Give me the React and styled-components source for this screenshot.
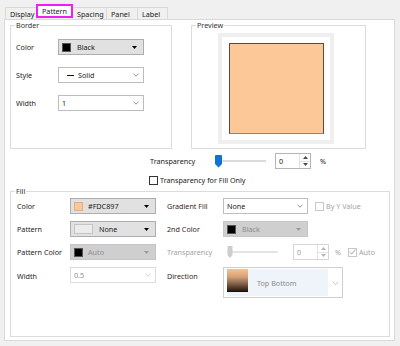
import React from "react";
import styled, { createGlobalStyle } from "styled-components";

const GlobalStyle = createGlobalStyle`
  html, body {
    margin: 0;
    padding: 0;
    background: #f0f0f0;
  }
  body {
    font-family: "Noto Sans", "Segoe UI", sans-serif;
    font-size: 7.2px;
    line-height: 10px;
    color: #1a1a1a;
  }
  * {
    box-sizing: border-box;
  }
`;

const Window = styled.div`
  width: 400px;
  height: 346px;
  padding: 7px 5px 0 4px;
  background: #f0f0f0;
`;

const TabRow = styled.div`
  display: flex;
  align-items: flex-end;
  height: 12px;
  padding-left: 1px;
`;

const Tab = styled.div`
  width: ${(p) => p.$w}px;
  height: ${(p) => (p.$active ? 14 : 12)}px;
  margin-left: -1px;
  margin-bottom: ${(p) => (p.$active ? 1 : 0)}px;
  display: flex;
  align-items: center;
  padding-left: 4px;
  background: ${(p) => (p.$active ? "#fff" : "#f0f0f0")};
  border: ${(p) => (p.$active ? "2px solid #f01ef0" : "1px solid #d9d9d9")};
  border-bottom: ${(p) => (p.$active ? "2px solid #f01ef0" : "none")};
  position: relative;
  z-index: ${(p) => (p.$active ? 2 : 1)};
  color: #1a1a1a;

  &:first-child {
    margin-left: 0;
  }
`;

const Panel = styled.div`
  width: 391px;
  height: 322px;
  background: #fff;
  border: 1px solid #d9d9d9;
  padding: 0 4px 0 5px;
`;

const TopRow = styled.div`
  display: flex;
  gap: 19px;
  height: 129px;
`;

const GroupBox = styled.fieldset`
  margin: 0;
  min-width: 0;
  width: ${(p) => p.$w}px;
  height: ${(p) => p.$h}px;
  border: 1px solid #dcdcdc;
  padding: 0;
`;

const Legend = styled.legend`
  margin-left: 4px;
  padding: 0 1px;
  line-height: 10px;
  color: #333;
`;

const GroupBody = styled.div`
  padding: ${(p) => p.$pad};
`;

const BorderGrid = styled.div`
  display: grid;
  grid-template-columns: 42px 86px;
  grid-auto-rows: 16px;
  row-gap: 12px;
  align-items: center;
`;

const Label = styled.span`
  color: ${(p) =>
    p.$disabled ? "#a3a3a3" : p.$accent ? "#3d1b1b" : "#1a1a1a"};
  padding-left: ${(p) => (p.$indent ? 11 : 0)}px;
  white-space: nowrap;
  align-self: ${(p) => (p.$top ? "start" : "center")};
  line-height: ${(p) => (p.$top ? "18px" : "10px")};
`;

const Dropdown = styled.div`
  display: flex;
  align-items: center;
  width: ${(p) => p.$w || 86}px;
  height: 16px;
  padding: 0 ${(p) => (p.$combo ? 6 : 4)}px 0 3px;
  background: ${(p) =>
    p.$combo ? (p.$disabled ? "#cfcfcf" : "#e1e1e1") : "#fff"};
  border: 1px solid
    ${(p) =>
      p.$combo
        ? p.$disabled
          ? "#c6c6c6"
          : "#adadad"
        : p.$disabled
        ? "#dcdcdc"
        : "#bdbdbd"};
  color: ${(p) => (p.$disabled ? "#8e8e8e" : "#1a1a1a")};
  white-space: nowrap;
`;

const Swatch = styled.span`
  width: 9px;
  height: 9px;
  flex: none;
  background: ${(p) => p.$color};
  border: 1px solid ${(p) => p.$edge || "#555"};
  margin-right: ${(p) => p.$gap || 6}px;
`;

const PatternSwatch = styled.span`
  width: 19px;
  height: 10px;
  flex: none;
  background: #ececec;
  border: 1px solid #c4c4c4;
  margin-right: 6px;
`;

const LineSample = styled.span`
  width: 7px;
  height: 1px;
  background: #111;
  margin: 0 4px 0 5px;
  flex: none;
`;

const ArrowSlot = styled.span`
  margin-left: auto;
  display: flex;
  align-items: center;
`;

const TriangleDown = ({ color = "#000" }) => (
  <svg width="5" height="3" viewBox="0 0 5 3">
    <path d="M0 0H5L2.5 3Z" fill={color} />
  </svg>
);

const Chevron = ({ color = "#707070" }) => (
  <svg width="6" height="4" viewBox="0 0 6 4">
    <path d="M0.5 0.8L3 3.2L5.5 0.8" fill="none" stroke={color} strokeWidth="0.8" />
  </svg>
);

const Select = ({ combo, disabled, w, arrow = true, children }) => (
  <Dropdown $combo={combo} $disabled={disabled} $w={w}>
    {children}
    {arrow && (
      <ArrowSlot>
        {combo ? (
          <TriangleDown color={disabled ? "#9a9a9a" : "#000"} />
        ) : (
          <Chevron color={disabled ? "#c4c4c4" : "#707070"} />
        )}
      </ArrowSlot>
    )}
  </Dropdown>
);

const PreviewFrame = styled.div`
  width: 116px;
  height: 111px;
  border: 4px solid #efefef;
  padding: 6px 6px 6px 7px;
`;

const PreviewSquare = styled.div`
  width: 95px;
  height: 91px;
  background: #fdc897;
  border: 1px solid #5a4a3e;
  border-bottom-color: #8c8680;
`;

const TransRow = styled.div`
  display: flex;
  align-items: center;
  height: 16px;
  margin-top: 4px;
  padding-left: 140px;
`;

const CheckRow = styled.div`
  display: flex;
  align-items: center;
  height: 12px;
  margin-top: 5px;
  padding-left: 139px;
`;

const Inline = styled.div`
  display: flex;
  align-items: center;
  align-self: ${(p) => (p.$top ? "start" : "center")};
`;

const FixedLabel = styled.span`
  width: ${(p) => p.$w}px;
  flex: none;
  color: ${(p) => (p.$disabled ? "#a3a3a3" : "#1a1a1a")};
  margin-left: ${(p) => p.$ml || 0}px;
  white-space: nowrap;
`;

const SpinBox = styled.div`
  display: flex;
  width: 36px;
  height: 16px;
  margin-left: ${(p) => p.$ml || 0}px;
  border: 1px solid ${(p) => (p.$disabled ? "#d6d6d6" : "#b4b4b4")};
  background: #fff;
  color: ${(p) => (p.$disabled ? "#9a9a9a" : "#1a1a1a")};
`;

const SpinValue = styled.span`
  flex: 1;
  padding-left: 3px;
  line-height: 14px;
`;

const SpinButtons = styled.div`
  width: 11px;
  display: flex;
  flex-direction: column;
  border-left: 1px solid #e2e2e2;
`;

const SpinHalf = styled.div`
  flex: 1;
  display: flex;
  align-items: center;
  justify-content: center;
  border-bottom: ${(p) => (p.$top ? "1px solid #e2e2e2" : "none")};
`;

const Spin = ({ disabled, ml }) => {
  const c = disabled ? "#b4b4b4" : "#4a4a4a";
  return (
    <SpinBox $disabled={disabled} $ml={ml}>
      <SpinValue>0</SpinValue>
      <SpinButtons>
        <SpinHalf $top>
          <svg width="5" height="3" viewBox="0 0 5 3">
            <path d="M0 3H5L2.5 0Z" fill={c} />
          </svg>
        </SpinHalf>
        <SpinHalf>
          <svg width="5" height="3" viewBox="0 0 5 3">
            <path d="M0 0H5L2.5 3Z" fill={c} />
          </svg>
        </SpinHalf>
      </SpinButtons>
    </SpinBox>
  );
};

const SliderSvg = styled.svg`
  flex: none;
  margin-left: ${(p) => p.$ml || 0}px;
`;

const Slider = ({ disabled, width = 51, ml = 0 }) => (
  <SliderSvg $ml={ml} width={width} height="13" viewBox={`0 0 ${width} 13`}>
    <rect x="0" y="5" width={width} height="2" fill={disabled ? "#e4e4e4" : "#dadada"} />
    {disabled ? (
      <path d="M0.5 0H5.5V9L3 12L0.5 9Z" fill="#cdcdcd" />
    ) : (
      <path d="M1 0H6Q7 0 7 1V9L3.5 12.5L0 9V1Q0 0 1 0Z" fill="#0f74d6" />
    )}
  </SliderSvg>
);

const Box = styled.span`
  width: 9px;
  height: 9px;
  flex: none;
  display: flex;
  align-items: center;
  justify-content: center;
  background: #fff;
  border: 1px solid ${(p) => (p.$disabled ? "#c8c8c8" : "#333")};
  margin: 0 ${(p) => p.$gap || 2}px 0 ${(p) => p.$ml || 0}px;
`;

const CheckText = styled.span`
  color: ${(p) => (p.$disabled ? "#a3a3a3" : "#1a1a1a")};
  white-space: nowrap;
`;

const FillGrid = styled.div`
  display: grid;
  grid-template-columns: 53px 86px 67px 1fr;
  grid-template-rows: 16px 16px 16px auto;
  row-gap: 7px;
  align-items: center;
`;

const DirectionBox = styled.div`
  width: 120px;
  height: 31px;
  border: 1px solid #cfcfcf;
  background: #fff;
  padding: 1px 3px 0 3px;
  display: flex;
  align-items: flex-start;
`;

const DirectionInner = styled.div`
  display: flex;
  align-items: center;
  width: 103px;
  height: 27px;
  background: #eff3fa;
`;

const GradientSwatch = styled.span`
  width: 21px;
  height: 23px;
  align-self: flex-start;
  background: linear-gradient(#f8c28e 0%, #d6a27a 35%, #7a5a44 70%, #2a1a10 100%);
  border-bottom: 1px solid #111;
`;

const DirectionText = styled.span`
  margin-left: 9px;
  color: #8b8b8b;
`;

const DirectionArrow = styled.span`
  margin-left: 4px;
  display: flex;
  align-items: center;
`;

export default function App() {
  return (
    <>
      <GlobalStyle />
      <Window>
        <TabRow>
          <Tab $w={32}>Display</Tab>
          <Tab $w={37} $active>
            Pattern
          </Tab>
          <Tab $w={35}>Spacing</Tab>
          <Tab $w={32}>Panel</Tab>
          <Tab $w={31}>Label</Tab>
        </TabRow>
        <Panel>
          <TopRow>
            <GroupBox $w={162} $h={129}>
              <Legend>Border</Legend>
              <GroupBody $pad="9px 5px 0 5px">
                <BorderGrid>
                  <Label>Color</Label>
                  <Select combo>
                    <Swatch $color="#000" />
                    Black
                  </Select>
                  <Label>Style</Label>
                  <Select>
                    <LineSample />
                    Solid
                  </Select>
                  <Label>Width</Label>
                  <Select>1</Select>
                </BorderGrid>
              </GroupBody>
            </GroupBox>
            <GroupBox $w={175} $h={129}>
              <Legend>Preview</Legend>
              <GroupBody $pad="3px 0 0 26px">
                <PreviewFrame>
                  <PreviewSquare />
                </PreviewFrame>
              </GroupBody>
            </GroupBox>
          </TopRow>

          <TransRow>
            <FixedLabel $w={65}>Transparency</FixedLabel>
            <Slider />
            <Spin ml={9} />
            <FixedLabel $w={10} $ml={9}>
              %
            </FixedLabel>
          </TransRow>
          <CheckRow>
            <Box />
            <CheckText>Transparency for Fill Only</CheckText>
          </CheckRow>

          <GroupBox $w={380} $h={151}>
            <Legend>Fill</Legend>
            <GroupBody $pad="2px 6px 0 6px">
              <FillGrid>
                <Label>Color</Label>
                <Select combo>
                  <Swatch $color="#fdc897" $edge="#d8b08a" $gap={5} />
                  #FDC897
                </Select>
                <Label $indent $accent>
                  Gradient Fill
                </Label>
                <Inline>
                  <Select w={85}>None</Select>
                  <Box $disabled $ml={7} />
                  <CheckText $disabled>By Y Value</CheckText>
                </Inline>

                <Label>Pattern</Label>
                <Select combo>
                  <PatternSwatch />
                  None
                </Select>
                <Label $indent $accent>
                  2nd Color
                </Label>
                <Inline>
                  <Select combo disabled w={85}>
                    <Swatch $color="#000" />
                    Black
                  </Select>
                </Inline>

                <Label>Pattern Color</Label>
                <Select combo disabled>
                  <Swatch $color="#000" $gap={5} />
                  Auto
                </Select>
                <Label $indent $disabled>
                  Transparency
                </Label>
                <Inline>
                  <Slider disabled ml={4} />
                  <Spin disabled ml={15} />
                  <FixedLabel $w={8} $ml={6} $disabled>
                    %
                  </FixedLabel>
                  <Box $disabled $ml={5}>
                    <svg width="7" height="6" viewBox="0 0 7 6">
                      <path d="M0.5 3L2.6 5L6.5 0.6" fill="none" stroke="#9a9a9a" strokeWidth="0.9" />
                    </svg>
                  </Box>
                  <CheckText $disabled>Auto</CheckText>
                </Inline>

                <Label $top>Width</Label>
                <Inline $top>
                  <Select disabled>0.5</Select>
                </Inline>
                <Label $indent $accent $top>
                  Direction
                </Label>
                <Inline>
                  <DirectionBox>
                    <DirectionInner>
                      <GradientSwatch />
                      <DirectionText>Top Bottom</DirectionText>
                    </DirectionInner>
                    <DirectionArrow>
                      <svg width="7" height="27" viewBox="0 0 7 27">
                        <path d="M0.8 13L3.5 15.6L6.2 13" fill="none" stroke="#b4b4b4" strokeWidth="0.8" />
                      </svg>
                    </DirectionArrow>
                  </DirectionBox>
                </Inline>
              </FillGrid>
            </GroupBody>
          </GroupBox>
        </Panel>
      </Window>
    </>
  );
}
